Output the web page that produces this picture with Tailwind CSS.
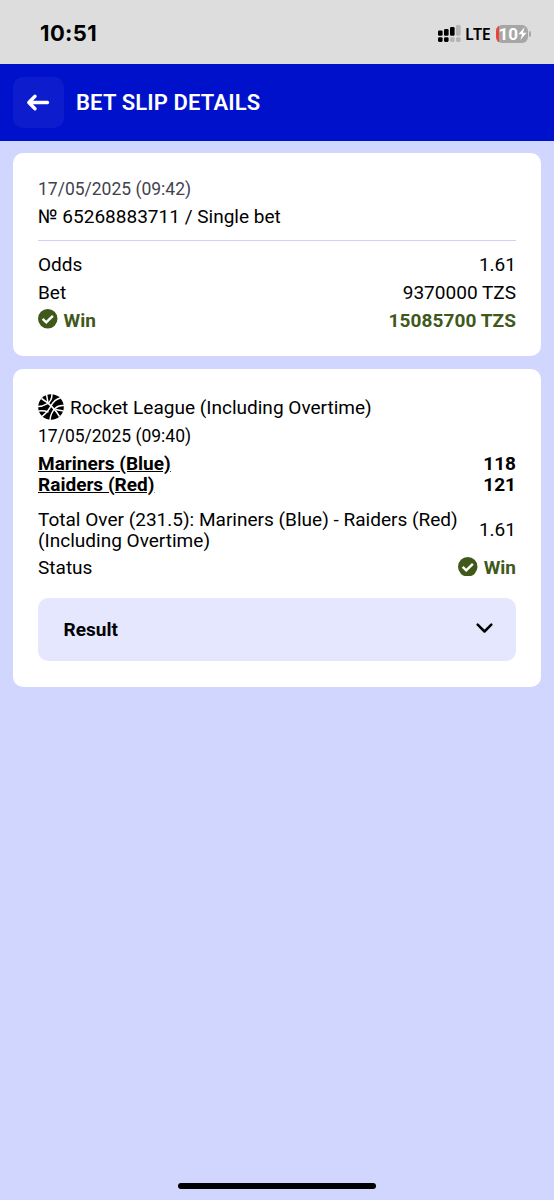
<!DOCTYPE html>
<html lang="en">
  <head>
    <meta charset="UTF-8" />
    <meta name="viewport" content="width=device-width, initial-scale=1.0" />
    <title>Bet Slip Details</title>
    <script src="https://cdn.jsdelivr.net/npm/@tailwindcss/browser@4"></script>
  </head>
  <body class="bg-[#d1d6ff] text-black font-[Roboto,sans-serif]">
    <div class="w-[554px] h-[1200px] flex flex-col overflow-hidden">
      <!-- Status bar -->
      <div class="h-16 shrink-0 bg-[#dddddd] flex items-center justify-between pl-10 pr-[23px] pt-[3px]">
        <span class="font-[Inter,sans-serif] font-bold text-[22px] tracking-[0.4px]">10:51</span>
        <div class="flex items-center">
          <svg class="w-[23px] h-[18px]" viewBox="0 0 23 18">
            <g fill="#000">
              <rect x="0" y="5.5" width="4.6" height="5.2" rx="1.3" />
              <rect x="6" y="4" width="4.6" height="6.7" rx="1.3" />
              <rect x="12" y="2" width="4.6" height="8.7" rx="1.3" />
              <rect x="0" y="12.3" width="4.6" height="4.6" rx="1.3" />
              <rect x="6" y="12.3" width="4.6" height="4.6" rx="1.3" />
            </g>
            <g fill="#b5b5b5">
              <rect x="18" y="0" width="4.6" height="10.7" rx="1.3" />
              <rect x="12" y="12.3" width="4.6" height="4.6" rx="1.3" />
              <rect x="18" y="12.3" width="4.6" height="4.6" rx="1.3" />
            </g>
          </svg>
          <span class="ml-1 font-['Noto_Sans',sans-serif] font-semibold text-[16px] leading-none tracking-[-0.3px]">LTE</span>
          <div class="ml-[5px] w-8 h-[18px] rounded-[6px] overflow-hidden bg-[#a6a6a6] flex items-center">
            <div class="w-[3px] h-full shrink-0 bg-[#f0403c]"></div>
            <span class="pt-0.5 font-[Roboto,sans-serif] font-bold text-[17px] leading-none text-white">10</span>
            <svg class="w-[9px] h-[13px] shrink-0" viewBox="0 0 8 12" fill="#fff">
              <path d="M6 0 0.2 6.8H3.6L2 12 7.8 5.2H4.4Z" />
            </svg>
          </div>
          <div class="ml-[1.5px] w-[2px] h-[6px] rounded-r-full bg-[#a6a6a6]"></div>
        </div>
      </div>

      <!-- Header -->
      <header class="h-[76.5px] shrink-0 bg-[#0011cb] flex items-center px-[12.5px]">
        <button class="w-[51px] h-[51px] rounded-[10px] bg-[#0d1dce] flex items-center justify-center">
          <svg class="w-6 h-5 -ml-px" viewBox="0 0 24 20" fill="none" stroke="#fff" stroke-width="3.4" stroke-linecap="round" stroke-linejoin="round">
            <path d="M21.5 10.5H3M9 4.3 2.8 10.5 9 16.7" />
          </svg>
        </button>
        <h1 class="ml-[12.5px] text-white font-semibold text-[22px] tracking-[0.15px]">BET SLIP DETAILS</h1>
      </header>

      <main class="flex flex-col gap-[13px] py-[12.5px] px-[13px]">
        <section class="h-[203px] bg-white rounded-[10px] px-[25px] pt-[22.5px] text-[19.05px] leading-[27.8px]">
          <p class="text-[#42424f] text-[17.5px]">17/05/2025 (09:42)</p>
          <p>№ 65268883711 / Single bet</p>
          <div class="h-[1.5px] bg-[#d1d0fb] mt-[8.5px] mb-[10px]"></div>
          <div class="flex justify-between"><span>Odds</span><span>1.61</span></div>
          <div class="flex justify-between"><span>Bet</span><span>9370000 TZS</span></div>
          <div class="flex justify-between font-bold text-[#40591a]">
            <span class="flex items-center gap-[6px]">
              <svg class="w-[19.5px] h-[19.5px] -mt-[3px]" viewBox="0 0 19 19">
                <circle cx="9.5" cy="9.5" r="9.5" fill="#40591a" />
                <path d="M4.5 9.7 8 13 14.5 6.6" fill="none" stroke="#fff" stroke-width="2.4" />
              </svg>
              Win
            </span>
            <span class="tracking-[0.08px]">15085700 TZS</span>
          </div>
        </section>

        <section class="h-[318px] bg-white rounded-[10px] px-[25px] pt-6 text-[19.05px] leading-7">
          <div class="flex items-center gap-[6px]">
            <svg class="w-[26px] h-[26px] -mt-px" viewBox="0 0 26 26">
              <circle cx="13" cy="13" r="12.8" fill="#000" />
              <g fill="none" stroke="#fff" stroke-width="1.5">
                <path d="M3.5 4.5C10 8.5 17 15 21.5 22.5" />
                <path d="M22.5 4C18 5 15 8 13 12C11 16 8 19.5 4 22.5" />
                <path d="M14 0C14 5 12.5 8 9 9.8C6 11.5 3 12.5 0 12.5" />
                <path d="M8.5 0.5L10 8.8" />
                <path d="M26 11.5C22 11 19.5 12 17 14.5C14 17.5 12.5 21 12 26" />
                <path d="M17.5 15.5L25.5 17" />
                <path d="M0.5 17C5 16 8 17 10.5 18" />
              </g>
            </svg>
            <span class="pt-px">Rocket League (Including Overtime)</span>
          </div>
          <p class="text-[17.5px] leading-[29px]">17/05/2025 (09:40)</p>
          <div class="mt-[1.5px] font-bold leading-[21.3px]">
            <div class="flex justify-between"><span class="underline">Mariners (Blue)</span><span>118</span></div>
            <div class="flex justify-between"><span class="underline">Raiders (Red)</span><span>121</span></div>
          </div>
          <div class="mt-[13.5px] flex items-center justify-between leading-[21.3px]">
            <span>Total Over (231.5): Mariners (Blue) - Raiders (Red)<br />(Including Overtime)</span>
            <span>1.61</span>
          </div>
          <div class="mt-[2.5px] flex justify-between">
            <span>Status</span>
            <span class="flex items-center gap-[6px] font-bold text-[#40591a]">
              <svg class="w-[19.5px] h-[19.5px] -mt-0.5" viewBox="0 0 19 19">
                <circle cx="9.5" cy="9.5" r="9.5" fill="#40591a" />
                <path d="M4.5 9.7 8 13 14.5 6.6" fill="none" stroke="#fff" stroke-width="2.4" />
              </svg>
              Win
            </span>
          </div>
          <button class="mt-4 w-full h-[63px] rounded-[10px] bg-[#e5e7ff] flex items-center justify-between pl-[25.5px] pr-[23px]">
            <span class="pt-px font-bold text-[19.05px]">Result</span>
            <svg class="w-[17px] h-[11px] -mt-px" viewBox="0 0 17 11" fill="none" stroke="#000" stroke-width="2.5" stroke-linecap="round" stroke-linejoin="round">
              <path d="M1.7 1.7 8.5 8.5 15.3 1.7" />
            </svg>
          </button>
        </section>
      </main>

      <!-- Home indicator -->
      <div class="mt-auto mb-[11px] mx-auto w-[198px] h-[6.5px] shrink-0 rounded-full bg-black"></div>
    </div>
  </body>
</html>
